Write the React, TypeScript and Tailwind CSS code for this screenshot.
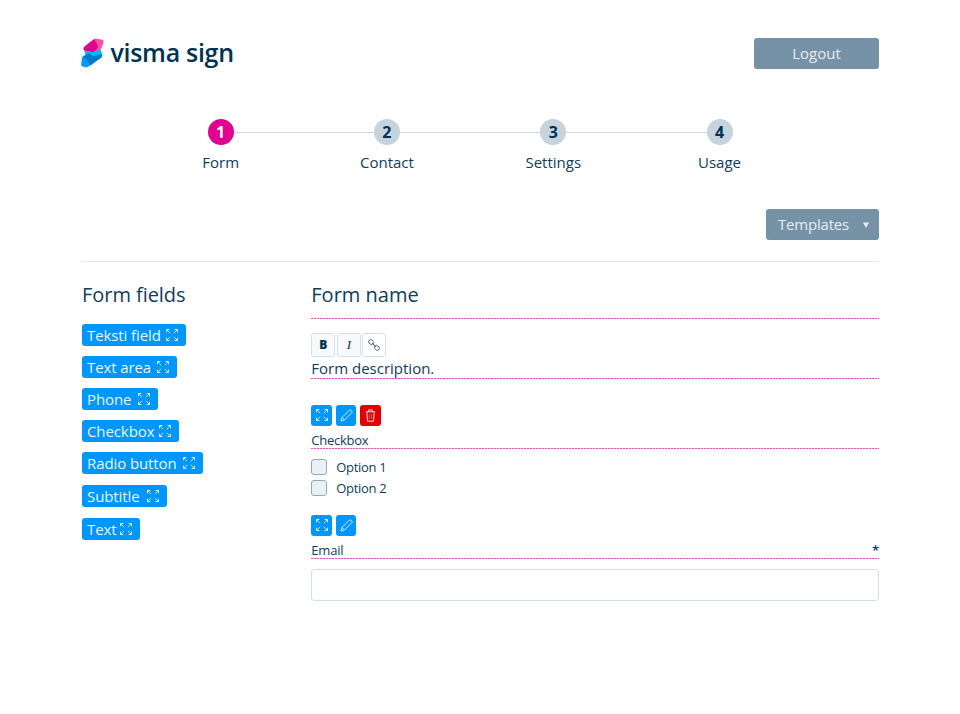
import type { ReactNode } from "react";

interface StepProps {
	number: number;
	label: string;
	active?: boolean;
}

interface FieldChipProps {
	label: string;
	className: string;
}

const STEPS: StepProps[] = [
	{ number: 1, label: "Form", active: true },
	{ number: 2, label: "Contact" },
	{ number: 3, label: "Settings" },
	{ number: 4, label: "Usage" },
];

const FIELDS: FieldChipProps[] = [
	{ label: "Teksti field", className: "w-[104px] mb-2.5" },
	{ label: "Text area", className: "w-[95px] mb-2.5" },
	{ label: "Phone", className: "w-[76.4px] mb-2.5" },
	{ label: "Checkbox", className: "w-[97.4px] mb-2.5" },
	{ label: "Radio button", className: "w-[121.4px] mb-[11px]" },
	{ label: "Subtitle", className: "w-[85px] mb-[11px]" },
	{ label: "Text", className: "w-[58.4px]" },
];

function Logo() {
	return (
		<div className="flex items-center">
			<svg width="24" height="30" viewBox="0 0 24 30" className="mt-[2px] mr-[5.5px]">
				<path d="M3.4 8.4 12.5 1.6Q14-.2 15.2 2L17.5 9.5 13 14.8 3.6 12.8Q1.4 10.8 3.4 8.4Z" fill="#e2008f" />
				<path d="M13.2 1.2Q14.2.6 15.5.7L21.3 1.8Q23 2.6 22.4 4.5L20.6 10Q20.2 11.3 19 11.9L13 14.8 17.5 8.5Z" fill="#ff4fa0" />
				<path d="M2.8 12.2 11.5 14.4 18.8 11.6 21.4 17 9.8 19 1.4 19.2 4.2 17Q4.4 14.6 2.8 12.2Z" fill="#00b8f5" />
				<path d="M1.6 19 10.8 13.2 20.8 16.2Q22 17.8 20.4 19.4L9.5 27.6 5.5 26Z" fill="#0078cc" />
				<path d="M4.4 12.6 11.2 14.2 19.6 11.7 21.2 16.5 12 18.2Z" fill="#00b8f5" />
				<path d="M1.8 18.4 4.5 20.5 9.5 27.2 6.3 29Q5.5 29.5 4.3 29.2L1.3 28.5Q0 27.8.2 26.5L.9 20Q1 19 1.8 18.4Z" fill="#0099ff" />
			</svg>
			<span className="-mt-px text-[25px] leading-[30px] font-semibold tracking-[-0.3px] text-[#003253]">
				visma sign
			</span>
		</div>
	);
}

function ExpandIcon() {
	return (
		<svg
			width="12"
			height="12"
			viewBox="0 0 12 12"
			fill="none"
			stroke="currentColor"
			strokeWidth="0.9"
			className="shrink-0"
		>
			<path d="M.5 3.4V.5H3.4M.7.7 4.2 4.2M8.6.5H11.5V3.4M11.3.7 7.8 4.2M.5 8.6V11.5H3.4M.7 11.3 4.2 7.8M11.5 8.6V11.5H8.6M11.3 11.3 7.8 7.8" />
		</svg>
	);
}

function PencilIcon() {
	return (
		<svg width="13" height="13" viewBox="0 0 13 13" fill="none" stroke="currentColor" strokeWidth="0.9">
			<path d="M1 12 2 8.5 9.3 1.2Q10.2.4 11.1 1.2L11.8 1.9Q12.6 2.8 11.8 3.7L4.5 11ZM2 8.5 4.5 11" />
		</svg>
	);
}

function TrashIcon() {
	return (
		<svg width="11" height="13" viewBox="0 0 11 13" fill="none" stroke="currentColor" strokeWidth="0.9">
			<path d="M.8 2.8H10.2M3.7 2.6V.9H7.3V2.6M1.8 3 2.5 12.2H8.5L9.2 3" />
			<path d="M4.3 5V10M6.7 5V10" opacity="0.4" />
		</svg>
	);
}

function LinkIcon() {
	return (
		<svg
			width="12"
			height="12"
			viewBox="0 0 12 12"
			fill="none"
			stroke="currentColor"
			strokeWidth="0.8"
			className="text-[#1c486a]"
		>
			<rect x="-2.6" y="-2" width="5.2" height="4" rx="1.8" transform="translate(3.1 3.1) rotate(45)" />
			<rect x="-2.6" y="-2" width="5.2" height="4" rx="1.8" transform="translate(8.9 8.9) rotate(45)" />
			<path d="M4 4 8 8" />
		</svg>
	);
}

function Step({ number, label, active }: StepProps) {
	return (
		<div className="flex w-[166.3px] flex-col items-center">
			<div
				className={`z-10 flex size-[26px] items-center justify-center rounded-full text-base font-bold ${
					active ? "bg-[#e2008f] text-white" : "bg-[#c6d3dd] text-[#003253]"
				}`}
			>
				{number}
			</div>
			<span className="mt-[7px] text-[15px] leading-5">{label}</span>
		</div>
	);
}

function FieldChip({ label, className }: FieldChipProps) {
	return (
		<div
			className={`flex h-[22px] items-center justify-between rounded-[3px] bg-[#0096ff] pr-[8.5px] pl-[5px] text-[15px] leading-[22px] tracking-[-0.1px] whitespace-nowrap text-[#e9f6ff] ${className}`}
		>
			<span>{label}</span>
			<ExpandIcon />
		</div>
	);
}

function ActionButton({ danger, children }: { danger?: boolean; children: ReactNode }) {
	return (
		<button
			className={`flex h-[21px] w-[20.5px] items-center justify-center rounded-[3px] text-[#e9f6ff] ${
				danger ? "bg-[#e00000]" : "bg-[#0096ff]"
			}`}
		>
			{children}
		</button>
	);
}

function ToolButton({ plain, children }: { plain?: boolean; children: ReactNode }) {
	return (
		<button
			className={`flex size-6 items-center justify-center rounded-[3px] border border-[#d3dfe8] ${
				plain ? "bg-white" : "bg-[#f7f9fc]"
			}`}
		>
			{children}
		</button>
	);
}

// Editable texts are underlined with small pink dashes
function DashedLine() {
	return (
		<div className="h-px bg-[repeating-linear-gradient(90deg,#ee55b5_0_2px,#fbd3eb_2px_3px)]" />
	);
}

function Option({ label }: { label: string }) {
	return (
		<label className="flex h-[21px] items-center gap-[9.5px] text-[13px] tracking-[-0.3px]">
			<span className="-mt-px size-[15.5px] rounded-[3px] border border-[#93a9b9] bg-[#eaf0f7]" />
			{label}
		</label>
	);
}

export default function App() {
	return (
		<div className="h-[714px] w-[960px] overflow-hidden bg-white pt-[36px] pr-[81px] pl-[82px] font-['Open_Sans',sans-serif] text-[#0f3d60]">
			<header className="flex h-[33px] items-start justify-between">
				<div className="-ml-px">
					<Logo />
				</div>
				<button className="mt-[1.5px] h-[31px] w-[125px] rounded-[3px] bg-[#7692a7] text-[15px] text-[#e6edf3]">
					Logout
				</button>
			</header>

			<nav className="mt-[50.4px] ml-[55.5px] grid w-[665.2px] grid-cols-4">
				<div className="col-span-4 col-start-1 row-start-1 mx-[83px] mt-[12.5px] h-px bg-[#cfdbe3]" />
				<div className="col-span-4 col-start-1 row-start-1 flex">
					{STEPS.map((step) => (
						<Step key={step.number} {...step} />
					))}
				</div>
			</nav>

			<div className="mt-[36.6px] flex justify-end">
				<button className="flex h-[31px] w-[113.4px] items-center justify-between rounded-[3px] bg-[#7692a7] pr-[10px] pl-[12.4px] text-[15px] tracking-[-0.2px] text-[#e6edf3]">
					Templates
					<svg width="6" height="6" viewBox="0 0 6 6" fill="currentColor" className="mt-px">
						<path d="M0 .5H6L3 6Z" />
					</svg>
				</button>
			</div>

			<hr className="mt-[21px] border-[#e3ecf4]" />

			<div className="mt-[19px] flex">
				<aside className="w-[229.3px]">
					<h2 className="text-xl leading-7 tracking-[-0.05px]">Form fields</h2>
					<div className="mt-[15px]">
						{FIELDS.map((field) => (
							<FieldChip key={field.label} {...field} />
						))}
					</div>
				</aside>

				<main className="w-[567.7px]">
					<h1 className="text-xl leading-7">Form name</h1>
					<div className="mt-[9px]">
						<DashedLine />
					</div>
					<div className="mt-[14px] flex gap-[1.5px] text-[#003253]">
						<ToolButton>
							<span className="text-xs font-extrabold">B</span>
						</ToolButton>
						<ToolButton>
							<span className="font-['Liberation_Serif',serif] text-[13px] italic">I</span>
						</ToolButton>
						<ToolButton plain>
							<LinkIcon />
						</ToolButton>
					</div>
					<p className="mt-[2px] h-[19px] text-[15px] leading-[18px]">Form description.</p>
					<DashedLine />

					<div className="mt-[26px] flex gap-1">
						<ActionButton>
							<ExpandIcon />
						</ActionButton>
						<ActionButton>
							<PencilIcon />
						</ActionButton>
						<ActionButton danger>
							<TrashIcon />
						</ActionButton>
					</div>
					<p className="mt-[6px] h-4 text-[13px] leading-[17px] tracking-[-0.25px]">Checkbox</p>
					<DashedLine />
					<div className="mt-2">
						<Option label="Option 1" />
						<Option label="Option 2" />
					</div>

					<div className="mt-4 flex gap-1">
						<ActionButton>
							<ExpandIcon />
						</ActionButton>
						<ActionButton>
							<PencilIcon />
						</ActionButton>
					</div>
					<div className="mt-[6px] flex h-4 justify-between text-[13px] leading-[17px] tracking-[-0.2px]">
						<span>Email</span>
						<span className="font-semibold">*</span>
					</div>
					<DashedLine />
					<input className="mt-[10.5px] block h-[31.5px] w-full rounded-[3px] border border-[#d3dfe8] px-2 text-sm outline-none" />
				</main>
			</div>
		</div>
	);
}
